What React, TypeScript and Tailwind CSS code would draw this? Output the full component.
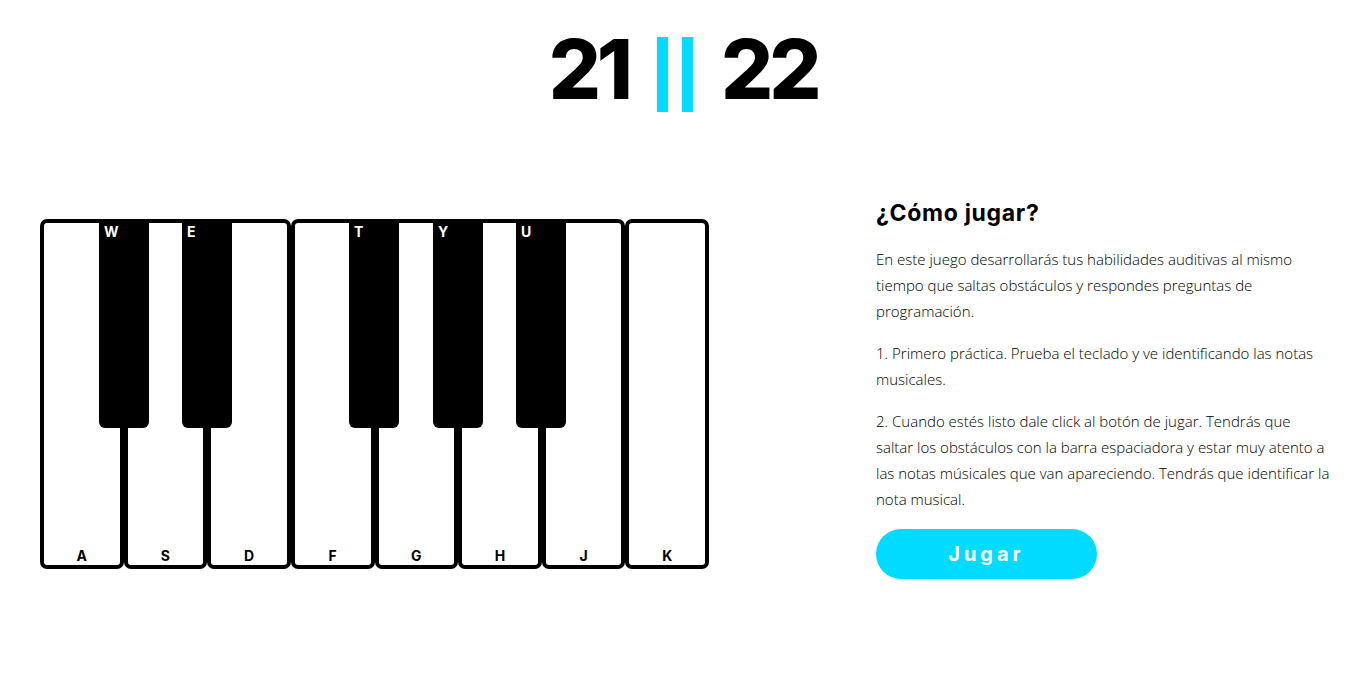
import React from 'react'

const whites = ['A', 'S', 'D', 'F', 'G', 'H', 'J', 'K']
const blacks = [
  { k: 'W', left: 'left-[59px]' },
  { k: 'E', left: 'left-[142px]' },
  { k: 'T', left: 'left-[309px]' },
  { k: 'Y', left: 'left-[393px]' },
  { k: 'U', left: 'left-[476px]' },
]

function Piano() {
  return (
    <div className="relative flex w-[669px] h-[350px] mt-[21px] shrink-0">
      {whites.map(k => (
        <div key={k} className="flex-1 flex items-end justify-center border-4 border-black rounded-[7px] bg-white pb-[2px]">
          <span className="text-[14px] font-bold leading-none">{k}</span>
        </div>
      ))}
      {blacks.map(b => (
        <div key={b.k} className={`absolute top-0 ${b.left} w-[50px] h-[209px] bg-black rounded-b-[6px] px-[5px] pt-0`}>
          <span className="text-white text-[14px] font-bold leading-none">{b.k}</span>
        </div>
      ))}
    </div>
  )
}

export default function App() {
  return (
    <div className="min-h-screen bg-white pl-10 pr-[36px] text-black font-['Inter',sans-serif]">
      <header className="flex justify-center items-start pt-[37px] gap-[28px] pr-[4px]">
        <span className="text-[82px] font-extrabold leading-[75px] tracking-tighter -mt-[5px]">21</span>
        <div className="flex gap-[14px]">
          <div className="w-[11px] h-[75px] bg-[#00dbff]" />
          <div className="w-[11px] h-[75px] bg-[#00dbff]" />
        </div>
        <span className="text-[82px] font-extrabold leading-[75px] tracking-tighter -mt-[5px]">22</span>
      </header>

      <main className="flex items-start justify-between mt-[86px]">
        <Piano />
        <aside className="w-[454px]">
          <h2 className="text-[23px] font-bold leading-[30px] tracking-[0.03em]">¿Cómo jugar?</h2>
          <div className="mt-[18px] font-['Open_Sans',sans-serif] font-light text-[15px] leading-[26px] text-black">
            <p>En este juego desarrollarás tus habilidades auditivas al mismo tiempo que saltas obstáculos y respondes preguntas de programación.</p>
            <p className="mt-4">1. Primero práctica. Prueba el teclado y ve identificando las notas musicales.</p>
            <p className="mt-4">2. Cuando estés listo dale click al botón de jugar. Tendrás que saltar los obstáculos con la barra espaciadora y estar muy atento a las notas músicales que van apareciendo. Tendrás que identificar la nota musical.</p>
          </div>
          <button className="mt-[17px] w-[221px] h-[50px] rounded-full bg-[#00dbff] text-white text-[20px] font-bold tracking-[0.2em]">Jugar</button>
        </aside>
      </main>
    </div>
  )
}
